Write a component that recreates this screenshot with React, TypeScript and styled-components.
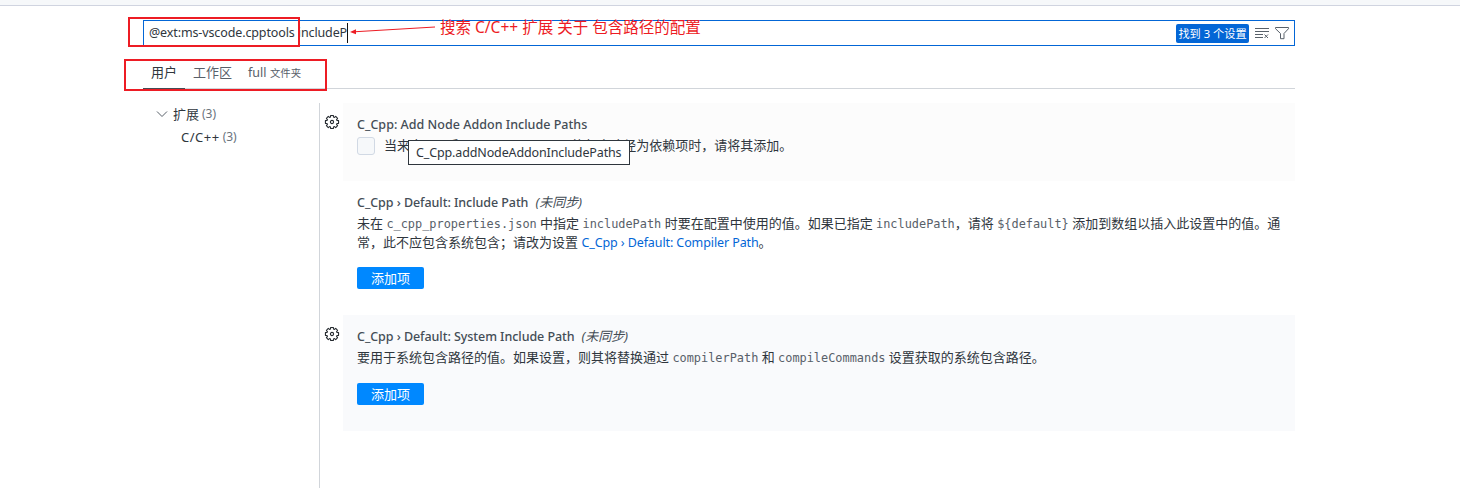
import React from "react";
import styled, { createGlobalStyle } from "styled-components";

const GlobalStyle = createGlobalStyle`
  * { box-sizing: border-box; }
  body {
    margin: 0;
    background: #fff;
    color: #2f363d;
    font-family: "Noto Sans", "Noto Sans CJK SC", sans-serif;
    font-size: 13px;
    overflow: hidden;
  }
`;

const Page = styled.div`
  position: relative;
  height: 488px;
  display: flex;
  flex-direction: column;
  overflow: hidden;
`;

const TitleStrip = styled.div`
  height: 6px;
  flex: none;
  background: #f6f8fa;
  border-bottom: 1px solid #d0d4e0;
`;

const Editor = styled.main`
  width: 1152px;
  margin-left: 143px;
  padding-top: 14px;
  flex: 1;
  display: flex;
  flex-direction: column;
`;

const Latin = styled.span<{ $size?: number; $track?: number }>`
  font-size: ${(p) => p.$size ?? 12.5}px;
  letter-spacing: ${(p) => p.$track ?? 0}px;
`;

const SearchBox = styled.div`
  height: 26px;
  flex: none;
  display: flex;
  align-items: center;
  border: 1px solid #0366d6;
  padding: 0 4px 0 5px;
`;

const Query = styled.div`
  flex: 1;
  display: flex;
  align-items: center;
  line-height: 22px;
  white-space: pre;
`;

const Caret = styled.span`
  width: 1px;
  height: 20px;
  background: #111;
`;

const CountBadge = styled.span`
  width: 73px;
  height: 19px;
  border-radius: 2px;
  background: #0366d6;
  color: #fff;
  font-size: 11.2px;
  line-height: 19px;
  text-align: center;
  white-space: nowrap;
  margin-right: 5px;
`;

const SearchIcon = styled.svg`
  width: 16px;
  height: 16px;
  margin-right: 4px;
  fill: none;
  stroke: #586069;
  &:last-child { margin-right: 0; }
`;

const Tabs = styled.nav`
  height: 32px;
  margin-top: 11px;
  flex: none;
  display: flex;
  border-bottom: 1px solid #d1d5da;
`;

const Tab = styled.div<{ $active?: boolean }>`
  height: 32px;
  padding: 0 8px;
  line-height: 31px;
  color: ${(p) => (p.$active ? "#2f363d" : "#586069")};
  border-bottom: 1px solid ${(p) => (p.$active ? "#444d56" : "transparent")};
  white-space: pre;
`;

const Small = styled.span`
  font-size: 10.4px;
`;

const Body = styled.div`
  flex: 1;
  display: flex;
  margin-top: 14px;
`;

const Toc = styled.aside`
  width: 177px;
  height: 385px;
  border-right: 1px solid #d1d5da;
`;

const TocRow = styled.div<{ $indent: number; $drop?: number }>`
  height: 22px;
  line-height: 22px;
  padding: ${(p) => p.$drop ?? 0}px 0 0 ${(p) => p.$indent}px;
  display: flex;
  align-items: center;
`;

const Count = styled.span`
  margin-left: 3px;
  font-size: 12px;
  color: #6a737d;
`;

const Chevron = styled.svg`
  width: 12px;
  height: 12px;
  margin-right: 5px;
  fill: none;
  stroke: #586069;
`;

const Settings = styled.section`
  flex: 1;
`;

const Setting = styled.article<{ $height: number }>`
  height: ${(p) => p.$height}px;
  display: flex;
`;

const GearCell = styled.div`
  width: 23px;
  padding: 11px 0 0 4px;
`;

const Gear = styled.svg`
  display: block;
  width: 16px;
  height: 16px;
  fill: none;
  stroke: #24292e;
  stroke-width: 1.1;
  stroke-linejoin: round;
`;

const Card = styled.div<{ $bg: string }>`
  width: 952px;
  padding: 11px 14px 0;
  background: ${(p) => p.$bg};
`;

const Title = styled.h3`
  margin: 0;
  height: 22px;
  line-height: 20px;
  font-size: 13px;
  font-weight: 500;
  color: #444d56;
  white-space: pre;
`;

const Sync = styled.em`
  font-weight: 400;
  margin-left: 7px;
`;

const Desc = styled.div`
  line-height: 19px;
  white-space: pre;
  height: 19px;
`;

const Code = styled.code`
  font-family: "DejaVu Sans Mono", monospace;
  font-size: 11.9px;
  color: #586069;
`;

const Link = styled.span`
  color: #0366d6;
`;

const CheckRow = styled.div`
  display: flex;
  align-items: center;
`;

const Checkbox = styled.span`
  width: 18px;
  height: 18px;
  margin: 1px 9px 0 0;
  border: 1px solid #d1d9e4;
  border-radius: 3px;
  background: #f6f8fa;
`;

const AddButton = styled.button<{ $gap: number }>`
  display: block;
  width: 67px;
  height: 22px;
  margin: ${(p) => p.$gap}px 0 0;
  padding: 0;
  border: 0;
  border-radius: 2px;
  background: #0088ff;
  color: #fff;
  font: inherit;
  line-height: 21px;
`;

const Tooltip = styled.div`
  position: absolute;
  left: 408px;
  top: 140px;
  width: 222px;
  height: 25px;
  padding-left: 7px;
  border: 1px solid #2f363d;
  background: #fff;
  line-height: 23px;
  white-space: nowrap;
`;

const RedFrame = styled.div<{ $x: number; $y: number; $w: number; $h: number }>`
  position: absolute;
  left: ${(p) => p.$x}px;
  top: ${(p) => p.$y}px;
  width: ${(p) => p.$w}px;
  height: ${(p) => p.$h}px;
  border: 2px solid #ed1c24;
`;

const Note = styled.div`
  position: absolute;
  left: 440px;
  top: 16px;
  line-height: 22px;
  font-size: 15.5px;
  color: #ed1c24;
  white-space: pre;
`;

const Arrow = styled.svg`
  position: absolute;
  left: 348px;
  top: 22px;
  width: 90px;
  height: 16px;
`;

const TEETH = 8;

// Each tooth runs inner edge, outer edge, outer edge, inner edge.
const gearOutline = Array.from({ length: TEETH }, (_, i) =>
  [
    [-0.29, 5.2],
    [-0.2, 6.7],
    [0.2, 6.7],
    [0.29, 5.2],
  ].map(([offset, radius]) => {
    const angle = (i * 2 * Math.PI) / TEETH + offset;
    return `${(8 + radius * Math.cos(angle)).toFixed(2)},${(8 + radius * Math.sin(angle)).toFixed(2)}`;
  })
)
  .flat()
  .join(" ");

function GearIcon() {
  return (
    <Gear viewBox="0 0 16 16">
      <polygon points={gearOutline} />
      <circle cx="8" cy="8" r="1.6" />
    </Gear>
  );
}

export default function App() {
  return (
    <>
      <GlobalStyle />
      <Page>
        <TitleStrip />
        <Editor>
          <SearchBox>
            <Query>
              <Latin $track={-0.12}>@ext:ms-vscode.cpptools includeP</Latin>
              <Caret />
            </Query>
            <CountBadge>找到 3 个设置</CountBadge>
            <SearchIcon viewBox="0 0 16 16">
              <path d="M1 3.500h14M1 6.500h14M1 9.500h8M1 12.500h8M10.500 9.500l3.500 3.500M14 9.500l-3.500 3.500" />
            </SearchIcon>
            <SearchIcon viewBox="0 0 16 16">
              <path d="M1.500 2.500h13v1.200L10 8.500v5.200H6.500V8.500L1.500 3.700z" />
            </SearchIcon>
          </SearchBox>
          <Tabs>
            <Tab $active>用户</Tab>
            <Tab>工作区</Tab>
            <Tab>
              <Latin>full</Latin> <Small>文件夹</Small>
            </Tab>
          </Tabs>
          <Body>
            <Toc>
              <TocRow $indent={13}>
                <Chevron viewBox="0 0 12 12">
                  <path d="M1 3.500l5 5 5-5" />
                </Chevron>
                扩展<Count>(3)</Count>
              </TocRow>
              <TocRow $indent={38} $drop={1}>
                <Latin $size={13} $track={0.5}>C/C++</Latin>
                <Count>(3)</Count>
              </TocRow>
            </Toc>
            <Settings>
              <Setting $height={78}>
                <GearCell><GearIcon /></GearCell>
                <Card $bg="#fcfcfc">
                  <Title><Latin $track={0.02}>C_Cpp: Add Node Addon Include Paths</Latin></Title>
                  <CheckRow>
                    <Checkbox />
                    <Desc>
                      当来自 <Code>nan</Code> 和 <Code>node-addon-api</Code> 的包含路径为依赖项时，请将其添加。
                    </Desc>
                  </CheckRow>
                </Card>
              </Setting>
              <Setting $height={134}>
                <GearCell />
                <Card $bg="#fff">
                  <Title><Latin $track={-0.06}>C_Cpp › Default: Include Path</Latin><Sync>(未同步)</Sync></Title>
                  <Desc>
                    未在 <Code>c_cpp_properties.json</Code> 中指定 <Code>includePath</Code> 时要在配置中使用的值。如果已指定 <Code>includePath</Code>，请将 <Code>{"${default}"}</Code> 添加到数组以插入此设置中的值。通
                  </Desc>
                  <Desc>
                    常，此不应包含系统包含；请改为设置 <Link><Latin $track={-0.1}>C_Cpp › Default: Compiler Path</Latin></Link>。
                  </Desc>
                  <AddButton $gap={15}>添加项</AddButton>
                </Card>
              </Setting>
              <Setting $height={116}>
                <GearCell><GearIcon /></GearCell>
                <Card $bg="#f9fafc">
                  <Title><Latin $track={-0.06}>C_Cpp › Default: System Include Path</Latin><Sync>(未同步)</Sync></Title>
                  <Desc>
                    要用于系统包含路径的值。如果设置，则其将替换通过 <Code>compilerPath</Code> 和 <Code>compileCommands</Code> 设置获取的系统包含路径。
                  </Desc>
                  <AddButton $gap={16}>添加项</AddButton>
                </Card>
              </Setting>
            </Settings>
          </Body>
        </Editor>
        <Tooltip><Latin $track={-0.13}>C_Cpp.addNodeAddonIncludePaths</Latin></Tooltip>
        <RedFrame $x={128} $y={17} $w={172} $h={30} />
        <RedFrame $x={124} $y={59} $w={203} $h={32} />
        <Arrow viewBox="0 0 90 16">
          <path d="M6 9.800L87 5" stroke="#ed1c24" fill="none" />
          <path d="M2 10l6-2.800v5z" fill="#ed1c24" />
        </Arrow>
        <Note>搜索 C/C++ 扩展 关于 包含路径的配置</Note>
      </Page>
    </>
  );
}
